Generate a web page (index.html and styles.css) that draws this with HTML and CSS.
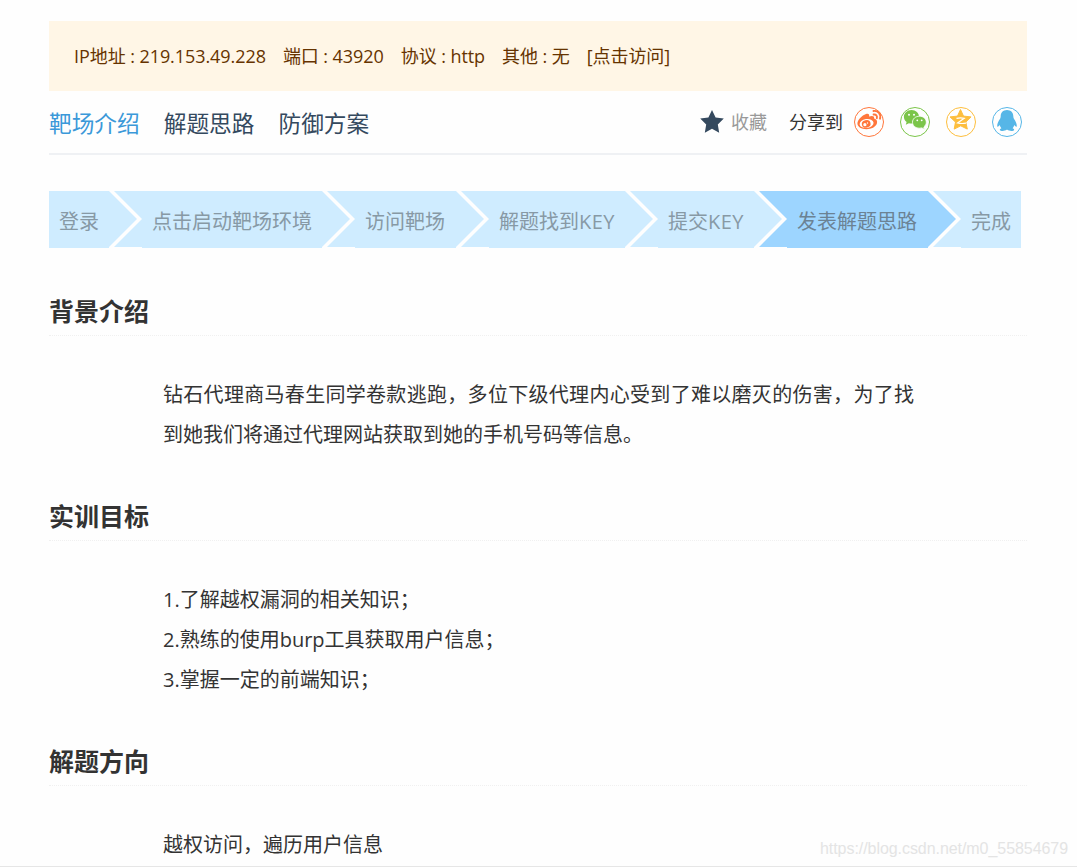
FILE: index.html
```html
<!DOCTYPE html>
<html lang="zh-CN">
<head>
    <meta charset="UTF-8">
    <meta name="viewport" content="width=device-width, initial-scale=1.0">
    <title>靶场介绍</title>
    <link rel="stylesheet" href="styles.css">
</head>
<body>
    <div class="page">
        <!-- Target address -->
        <div class="address">
            <span>IP地址 : 219.153.49.228</span>
            <span>端口 : 43920</span>
            <span>协议 : http</span>
            <span>其他 : 无</span>
            <a>[点击访问]</a>
        </div>

        <!-- Tabs and share buttons -->
        <div class="toolbar">
            <div class="tabs">
                <a class="active">靶场介绍</a>
                <a>解题思路</a>
                <a>防御方案</a>
            </div>
            <div class="share">
                <svg class="star" width="24" height="24" viewBox="0 0 24 24">
                    <path fill="#34495e" d="M12 0l3.600 7.600 8.200 1-6 5.800 1.400 8.400-7.200-4.100-7.200 4.100 1.400-8.400-6-5.800 8.200-1z"/>
                </svg>
                <span class="collect">收藏</span>
                <span class="share-label">分享到</span>
                <div class="icons">
                    <svg width="30" height="30" viewBox="0 0 30 30">
                        <circle cx="15" cy="15" r="14.500" fill="none" stroke="#ff763b"/>
                        <path fill="#ff763b" d="M12 7c2.300-.9 3.700.2 3.100 2.600 2.700-1.100 5.600-.9 5 2 2.400.8 3.600 2.500 2.800 4.900-1.100 3.500-5.600 5.700-10.400 5.700-5 0-9-2.200-9.100-5.700C3.400 13 8 8.300 12 7z"/>
                        <ellipse cx="12.600" cy="16.500" rx="7" ry="4.500" fill="#fff" transform="rotate(-8 12.6 16.5)"/>
                        <ellipse cx="12.200" cy="16.900" rx="4.400" ry="3.800" fill="#ff763b" transform="rotate(-15 12.2 16.9)"/>
                        <circle cx="10.900" cy="17.700" r="1.600" fill="#fff"/>
                        <circle cx="13.500" cy="16" r=".7" fill="#fff"/>
                        <path fill="none" stroke="#ff763b" stroke-width="1.900" stroke-linecap="round" d="M19.500 4c4.700-.7 7.800 3.300 6.500 7.700M19.600 7.500c2.400-.4 3.900 1.500 3.200 3.700"/>
                    </svg>
                    <svg width="30" height="30" viewBox="0 0 30 30">
                        <circle cx="15" cy="15" r="14.500" fill="none" stroke="#7bc549"/>
                        <path fill="#7bc549" d="M11.500 3C7.200 3 3.900 6 3.900 9.800c0 2.100 1 4 2.700 5.200l-.8 2.700 3.100-1.500c.8.300 1.700.4 2.600.4 4.300 0 7.600-3 7.600-6.800S15.800 3 11.500 3z"/>
                        <path fill="#7bc549" stroke="#fff" stroke-width=".8" d="M19.500 9.200c-4 0-7 2.600-7 6s3 6 7 6c.8 0 1.600-.1 2.300-.3l2.700 1.400-.7-2.300c1.500-1.200 2.500-2.900 2.500-4.800 0-3.400-3-6-6.800-6z"/>
                        <g fill="#fff">
                            <circle cx="9" cy="7.800" r="1"/>
                            <circle cx="14" cy="7.800" r="1"/>
                            <circle cx="17.300" cy="13.300" r=".9"/>
                            <circle cx="21.700" cy="13.300" r=".9"/>
                        </g>
                    </svg>
                    <svg width="30" height="30" viewBox="0 0 30 30">
                        <circle cx="15" cy="15" r="14.500" fill="none" stroke="#fdbe3d"/>
                        <path fill="#fdbe3d" stroke="#fdbe3d" stroke-linejoin="round" d="M14.500 2.500l3 6.600 7.500.8-5.200 5.200 1.500 7-6.600-3.300-6.500 3.300 1.300-7L4 9.900l7.500-.8z"/>
                        <path fill="none" stroke="#fff" stroke-width="1.200" d="M10.500 11.300c2.800-.5 5.200-.5 7.700 0l-6.700 4.600c2.600.7 5.500.8 8.500.2"/>
                    </svg>
                    <svg width="30" height="30" viewBox="0 0 30 30">
                        <circle cx="15" cy="15" r="14.500" fill="none" stroke="#56b6e7"/>
                        <path fill="#56b6e7" d="M15 3c-4 0-6.300 2.800-6.300 6.300 0 1-.2 1.700-.6 2.400-1.700 2.500-3 5-2.900 7.200.1 1.300 1 1.200 2.500-.8.3 1.300.9 2.300 1.700 3.100-1.300.6-1.700 1.100-1.500 1.700.5 1.400 5 1.300 6.700-.1h.8c1.700 1.400 6.200 1.500 6.700.1.200-.6-.2-1.100-1.500-1.700.8-.8 1.400-1.800 1.700-3.100 1.500 2 2.400 2.100 2.500.8.100-2.200-1.200-4.700-2.900-7.200-.4-.7-.6-1.400-.6-2.400C21.300 5.800 19 3 15 3z"/>
                    </svg>
                </div>
            </div>
        </div>

        <!-- Progress steps -->
        <div class="steps">
            <div class="step">登录</div>
            <i class="arrow"></i>
            <div class="step">点击启动靶场环境</div>
            <i class="arrow"></i>
            <div class="step visit">访问靶场</div>
            <i class="arrow"></i>
            <div class="step find-key">解题找到<span class="key">KEY</span></div>
            <i class="arrow"></i>
            <div class="step submit-key">提交<span class="key">KEY</span></div>
            <i class="arrow to-current"></i>
            <div class="step current">发表解题思路</div>
            <i class="arrow from-current"></i>
            <div class="step">完成</div>
        </div>

        <div class="section">
            <h2>背景介绍</h2>
            <div class="content">
                <p>钻石代理商马春生同学卷款逃跑，多位下级代理内心受到了难以磨灭的伤害，为了找到她我们将通过代理网站获取到她的手机号码等信息。</p>
            </div>
        </div>

        <div class="section">
            <h2>实训目标</h2>
            <div class="content">
                <p>1.了解越权漏洞的相关知识；</p>
                <p>2.熟练的使用burp工具获取用户信息；</p>
                <p>3.掌握一定的前端知识；</p>
            </div>
        </div>

        <div class="section">
            <h2>解题方向</h2>
            <div class="content">
                <p>越权访问，遍历用户信息</p>
            </div>
        </div>
    </div>
    <div class="watermark">https://blog.csdn.net/m0_55854679</div>
</body>
</html>
```
FILE: styles.css
```css
* {
    box-sizing: border-box;
}

body {
    margin: 0;
    height: 867px;
    overflow: hidden;
    position: relative;
    background-color: #fefefe;
    border-bottom: 1px solid #e6e6e6;
    color: #333;
    font-family: "Open Sans", "Noto Sans CJK SC", sans-serif;
}

.page {
    width: 978px;
    margin: 21px 0 0 49px;
}

/* Address bar */
.address {
    display: flex;
    gap: 17px;
    height: 70px;
    padding-left: 25px;
    line-height: 70px;
    font-size: 18px;
    letter-spacing: -0.07px;
    white-space: nowrap;
    color: #663300;
    background-color: #fff6e6;
}

/* Tabs */
.toolbar {
    display: flex;
    justify-content: space-between;
    height: 64px;
    border-bottom: 2px solid #eff1f4;
}

.tabs {
    display: flex;
    gap: 24px;
    line-height: 65px;
    font-size: 22.7px;
    color: #34495e;
}

.tabs .active {
    color: #3b99d9;
}

.share {
    display: flex;
    align-items: center;
    height: 62px;
    padding-right: 5px;
    font-size: 18px;
}

.collect,
.share-label {
    padding-bottom: 3px;
}

.collect {
    margin: 0 22px 0 7px;
    color: #999;
}

.share-label {
    margin-right: 11px;
}

.icons {
    display: flex;
    gap: 16px;
}

/* Steps */
.steps {
    display: flex;
    height: 57px;
    margin: 36px 0 2px;
    line-height: 61px;
    font-size: 20px;
    white-space: nowrap;
    color: #8799a5;
}

.step {
    padding: 0 10px;
    background-color: #cfecff;
}

.step.visit {
    width: 101px;
}

.step.find-key {
    width: 136px;
}

.step.submit-key {
    width: 96px;
}

.step.current {
    width: 141px;
    color: #6b8294;
    background-color: #9dd5ff;
}

.key {
    letter-spacing: 0.5px;
}

.arrow {
    position: relative;
    width: 33px;
    height: 57px;
}

.arrow::before,
.arrow::after {
    content: "";
    position: absolute;
    top: 0;
    left: 0;
    width: 33px;
    height: 56px;
    background-color: #cfecff;
}

.arrow::before {
    clip-path: polygon(0 0, 28px 28px, 0 56px);
}

.arrow::after {
    clip-path: polygon(5px 0, 100% 0, 100% 100%, 5px 100%, 33px 28px);
}

.to-current::after,
.from-current::before {
    background-color: #9dd5ff;
}

/* Sections */
.section {
    padding-top: 36px;
}

.section h2 {
    height: 50px;
    margin: 0;
    line-height: 50px;
    font-size: 25px;
    border-bottom: 1px dotted #f0f0f0;
}

.content {
    width: 751px;
    margin-left: 114px;
    padding-top: 39px;
    line-height: 40px;
    font-size: 20px;
    text-align: justify;
}

.content p {
    margin: 0;
}

.watermark {
    position: absolute;
    right: 9px;
    bottom: 7px;
    font: 16px/20px "Liberation Sans", Arial, sans-serif;
    letter-spacing: -0.06px;
    color: #e4e4e4;
}
```
